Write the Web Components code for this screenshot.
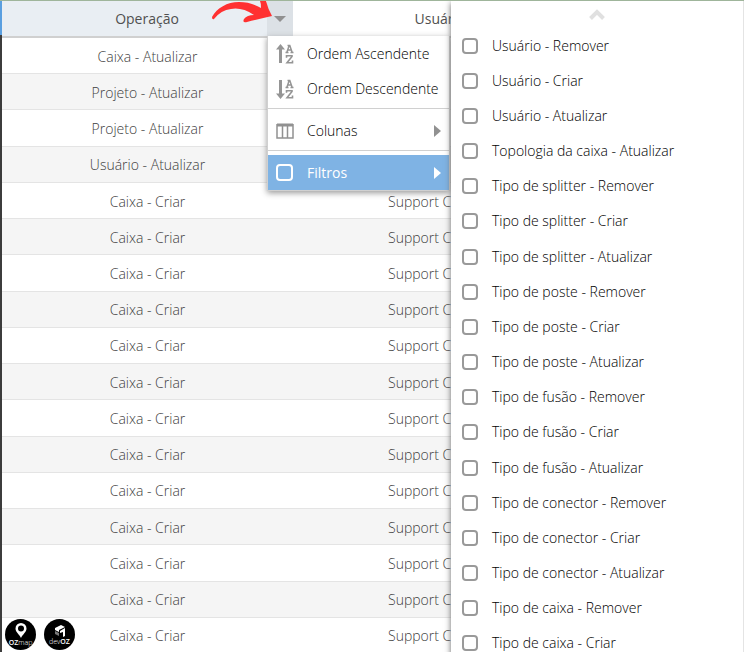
<!DOCTYPE html>
<html lang="pt-BR">
<head>
<meta charset="utf-8">
<title>Histórico</title>
<style>
  html, body { height: 100%; }
  body {
    margin: 0;
    overflow: hidden;
    background: #fff;
    color: #404040;
    font: 300 14px/20px "Open Sans", "Noto Sans", sans-serif;
  }
</style>
</head>
<body>
<log-page></log-page>

<script>
  const operations = [
    "Caixa - Atualizar", "Projeto - Atualizar", "Projeto - Atualizar", "Usuário - Atualizar",
    ...Array(13).fill("Caixa - Criar"),
  ];

  const filters = [
    "Usuário - Remover", "Usuário - Criar", "Usuário - Atualizar",
    "Topologia da caixa - Atualizar",
    "Tipo de splitter - Remover", "Tipo de splitter - Criar", "Tipo de splitter - Atualizar",
    "Tipo de poste - Remover", "Tipo de poste - Criar", "Tipo de poste - Atualizar",
    "Tipo de fusão - Remover", "Tipo de fusão - Criar", "Tipo de fusão - Atualizar",
    "Tipo de conector - Remover", "Tipo de conector - Criar", "Tipo de conector - Atualizar",
    "Tipo de caixa - Remover", "Tipo de caixa - Criar",
  ];

  const sortIcon = (arrow) => `
    <svg slot="icon" width="18" height="20" viewBox="0 0 18 20" fill="none" stroke="#959595">
      <path d="${arrow}" fill="#959595" stroke="none"/>
      <path d="M9.500 8.500h3M14.500 8.500h3M10.800 8.500L13.200 1.500h.6L16.200 8.500M12 6h3.500M11.500 1.500h2" stroke-width="1.500"/>
      <path d="M10.500 13.800V11.800h5.500v.6l-5 6.300h5.500v-2.200" stroke-width="1.600"/>
    </svg>`;

  class BaseElement extends HTMLElement {
    constructor() {
      super();
      this.attachShadow({ mode: "open" });
    }

    connectedCallback() {
      this.shadowRoot.innerHTML = this.template();
    }
  }

  // table of logged operations
  class LogGrid extends BaseElement {
    template() {
      const rows = operations.map((name, i) =>
        `<tr><td>${name}</td><td class="user">${i < 4 ? "" : "Support C"}</td></tr>`).join("");
      return `
      <style>
        :host { display: block; height: 100%; }
        table {
          width: 100%;
          height: calc(100% + 2px);
          table-layout: fixed;
          border-collapse: separate;
          border-spacing: 0;
        }
        col.operation { width: 291px; }
        col.user { width: 294px; }
        th, td { padding: 0; text-align: center; color: #404040; }
        th {
          height: 35px;
          font-weight: 400;
          color: #505050;
          border-bottom: 2px solid #d0d0d0;
        }
        th.active { background: #e9eef3; }
        .head { display: grid; grid-template-columns: 1fr 26px; height: 35px; align-items: center; }
        .head span { padding-left: 25px; }
        .head button {
          height: 100%;
          padding: 0;
          border: 0;
          background: #dce1e6;
          display: grid;
          place-items: center;
        }
        td { border-bottom: 1px solid #e4e4e4; padding-top: 2px; }
        td.user { text-align: left; padding-left: 95px; }
        tbody tr:nth-child(even) { background: #f5f5f5; }
      </style>
      <table>
        <colgroup><col class="operation"><col class="user"><col></colgroup>
        <thead>
          <tr>
            <th class="active"><div class="head"><span>Operação</span>
              <button aria-label="Menu da coluna">
                <svg width="12" height="6"><path d="M0 0h12L6 6z" fill="#909090"/></svg>
              </button></div></th>
            <th>Usuário</th>
          </tr>
        </thead>
        <tbody>${rows}</tbody>
      </table>`;
    }
  }
  customElements.define("log-grid", LogGrid);

  // one line of the column menu, with an icon slot
  class MenuItem extends BaseElement {
    template() {
      const arrow = this.hasAttribute("submenu")
        ? `<svg width="7" height="12"><path d="M0 0L7 6L0 12z" fill="currentColor"/></svg>` : "";
      return `
      <style>
        :host { display: block; }
        button {
          width: 100%;
          height: 35px;
          padding: 0 8px;
          border: 0;
          display: grid;
          grid-template-columns: 18px 1fr auto;
          column-gap: 13px;
          align-items: center;
          text-align: left;
          white-space: nowrap;
          background: none;
          color: #000;
          font: inherit;
        }
        button > svg { color: #919191; }
        :host([active]) button { background: #7fb3e4; color: #fff; font-weight: 400; }
        :host([active]) button > svg { color: #fff; }
      </style>
      <button><slot name="icon"></slot><span><slot></slot></span>${arrow}</button>`;
    }
  }
  customElements.define("menu-item", MenuItem);

  class ColumnMenu extends BaseElement {
    template() {
      return `
      <style>
        :host {
          display: block;
          width: 181px;
          border: 1px solid #d0d0d0;
          border-top: 0;
          background: #fff;
          box-shadow: 0 2px 6px #999;
        }
        hr { margin: 2px 0 4px; border: 0; border-top: 1px solid #d0d0d0; }
      </style>
      <menu-item>${sortIcon("M4.500 0L9 5.500H6V19H3V5.500H0z")}Ordem Ascendente</menu-item>
      <menu-item>${sortIcon("M4.500 20L9 14.500H6V1H3v13.500H0z")}Ordem Descendente</menu-item>
      <hr>
      <menu-item submenu>
        <svg slot="icon" width="18" height="16" fill="none" stroke="#919191">
          <path d="M1 2h16" stroke-width="3"/><path d="M1 1v14h16V1M6.500 2v13M11.500 2v13" stroke-width="1.500"/>
        </svg>Colunas</menu-item>
      <hr>
      <menu-item submenu active>
        <svg slot="icon" width="17" height="17" fill="none" stroke="#fff">
          <rect x="1" y="1" width="15" height="15" rx="3" stroke-width="2"/>
        </svg>Filtros</menu-item>`;
    }
  }
  customElements.define("column-menu", ColumnMenu);

  class FilterMenu extends BaseElement {
    template() {
      const items = filters.map((name) =>
        `<li><label><input type="checkbox">${name}</label></li>`).join("");
      return `
      <style>
        :host {
          display: grid;
          grid-template-rows: 27px 1fr;
          border-right: 1px solid #e4e4e4;
          background: #fff;
          color: #000;
          box-shadow: 0 2px 6px #666;
        }
        .up { border: 0; padding: 0; background: none; display: grid; place-items: center; }
        ul { margin: 0; padding: 0; list-style: none; display: grid; grid-auto-rows: 1fr; }
        label { display: flex; align-items: center; gap: 14px; height: 100%; padding-left: 11px; }
        input {
          appearance: none;
          box-sizing: border-box;
          width: 16px;
          height: 16px;
          margin: 0;
          border: 2px solid #999;
          border-radius: 4px;
        }
      </style>
      <button class="up" aria-label="Rolar para cima">
        <svg width="16" height="11" fill="none" stroke="#e0e0e0" stroke-width="4"><path d="M1.500 9.500L8 3L14.500 9.500"/></svg>
      </button>
      <ul>${items}</ul>`;
    }
  }
  customElements.define("filter-menu", FilterMenu);

  class RoundLogo extends BaseElement {
    template() {
      return `
      <style>
        :host {
          display: grid;
          justify-items: center;
          align-content: center;
          width: 31px;
          height: 31px;
          border-radius: 50%;
          background: #000;
          color: #fff;
          font-size: 7px;
          line-height: 8px;
          font-weight: 300;
        }
      </style>
      <slot name="mark"></slot><span><slot></slot></span>`;
    }
  }
  customElements.define("round-logo", RoundLogo);

  class LogPage extends BaseElement {
    template() {
      return `
      <style>
        :host {
          display: block;
          box-sizing: border-box;
          position: relative;
          height: 100%;
          overflow: hidden;
          border-top: 1px solid #9fb59b;
          padding-left: 2px;
          background: linear-gradient(#5a9fe0 34px, #3c3c3c 34px) left / 2px 100% no-repeat;
        }
        column-menu { position: absolute; left: 267px; top: 35px; }
        filter-menu { position: absolute; left: 451px; right: 0; top: 0; bottom: -9px; }
        .logos { position: absolute; left: 5px; bottom: 2px; display: flex; gap: 8px; }
        .arrow { position: absolute; left: 211px; top: 0; }
        b { font-weight: 600; }
      </style>
      <log-grid></log-grid>
      <column-menu></column-menu>
      <filter-menu></filter-menu>
      <svg class="arrow" width="62" height="22" viewBox="0 0 62 22">
        <path fill="#ff3131" d="M1 16C6 7 16 1 28 1Q40 1 50 7Q50 2 49 0H55Q57 8 61 15Q48 18 36 21Q31 22 33 18Q36 14 43 14Q31 6 20 8Q10 9 3 18Q1 19 1 16z"/>
      </svg>
      <div class="logos">
        <round-logo>
          <svg slot="mark" width="12" height="16" viewBox="0 0 12 16"><path fill="#fff" fill-rule="evenodd" d="M6 0a5.500 5.500 0 0 0-5.500 5.500C.5 9 4 11 6 15c2-4 5.500-6 5.500-9.500A5.500 5.500 0 0 0 6 0zM6 2.500a3 3 0 1 1 0 6a3 3 0 0 1 0-6z"/></svg>
          <b>OZ</b>map
        </round-logo>
        <round-logo>
          <svg slot="mark" width="12" height="14" viewBox="0 0 12 14"><path fill="#fff" d="M1 4L7 1l4 2-6 3v2L1 6zM6 7l5-3v8l-2 1V8L6 9z"/><path fill="#777" d="M1 7l4 2v3L1 10z"/></svg>
          dev<b>OZ</b>
        </round-logo>
      </div>`;
    }
  }
  customElements.define("log-page", LogPage);
</script>
</body>
</html>
